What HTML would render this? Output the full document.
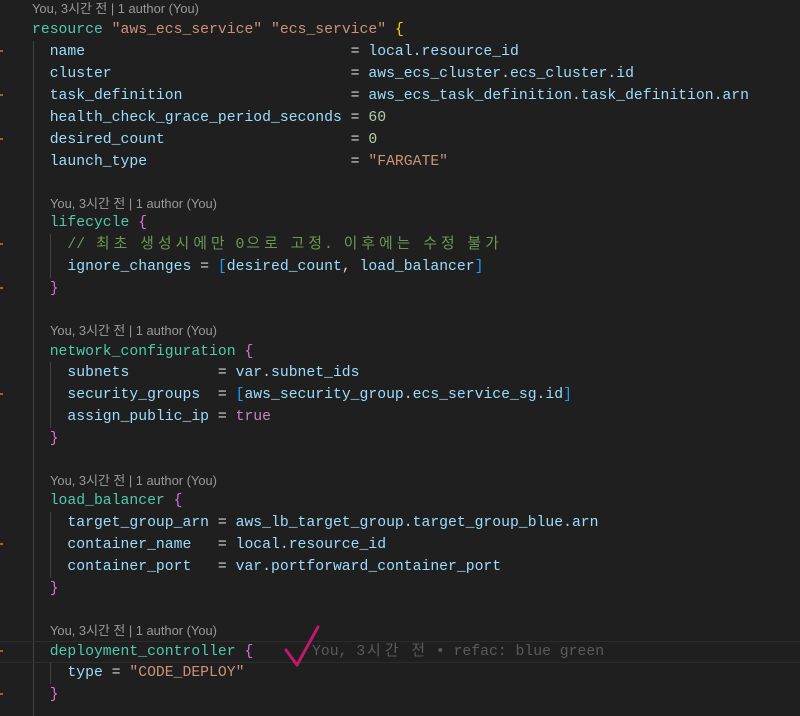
<!DOCTYPE html>
<html><head><meta charset="utf-8"><style>
body{margin:0;width:800px;height:714px;background:#1f1f1f;overflow:hidden;position:relative;font-family:"Liberation Mono","Noto Sans CJK KR",monospace;font-size:14.75px;color:#d4d4d4}
.l{position:absolute;left:32px;height:22px;line-height:22px;white-space:pre;margin-top:2px}
.cl{position:absolute;height:18px;line-height:18px;font-family:"Liberation Sans","Noto Sans CJK KR",sans-serif;font-size:12.9px;color:#999;white-space:pre}
.k{color:#4ec9b0}.s{color:#ce9178}.a{color:#9cdcfe}.n{color:#b5cea8}.y{color:#ffd700}.p{color:#da70d6}.b{color:#179fff}.c{color:#6a9955}.t{color:#c586c0}
.ko{display:inline-block;width:17.7px;text-align:center}
.g{position:absolute;width:1px;background:#404040}
.m{position:absolute;left:0;width:3px;height:2px;background:#a0602a}
</style></head><body>
<div class="g" style="left:33px;top:41px;height:675px"></div>
<div class="g" style="left:50px;top:234px;height:44px"></div>
<div class="g" style="left:50px;top:362px;height:66px"></div>
<div class="g" style="left:50px;top:512px;height:66px"></div>
<div class="g" style="left:50px;top:662px;height:22px"></div>
<div style="position:absolute;left:0;right:0;top:641px;height:22px;border-top:1px solid #2c2c2c;border-bottom:1px solid #2c2c2c;box-sizing:border-box"></div>

<div class="cl" style="left:32px;top:0">You, 3시간 전 | 1 author (You)</div>
<div class="l" style="top:17px"><span class="k">resource</span> <span class="s">"aws_ecs_service"</span> <span class="s">"ecs_service"</span> <span class="y">{</span></div>
<div class="l" style="top:39px">  <span class="a">name</span>                              = <span class="a">local.resource_id</span></div>
<div class="l" style="top:61px">  <span class="a">cluster</span>                           = <span class="a">aws_ecs_cluster.ecs_cluster.id</span></div>
<div class="l" style="top:83px">  <span class="a">task_definition</span>                   = <span class="a">aws_ecs_task_definition.task_definition.arn</span></div>
<div class="l" style="top:105px">  <span class="a">health_check_grace_period_seconds</span> = <span class="n">60</span></div>
<div class="l" style="top:127px">  <span class="a">desired_count</span>                     = <span class="n">0</span></div>
<div class="l" style="top:149px">  <span class="a">launch_type</span>                       = <span class="s">"FARGATE"</span></div>

<div class="cl" style="left:50px;top:195px">You, 3시간 전 | 1 author (You)</div>
<div class="l" style="top:210px">  <span class="k">lifecycle</span> <span class="p">{</span></div>
<div class="l c" style="top:232px">    // <span class="ko">최</span><span class="ko">초</span> <span class="ko">생</span><span class="ko">성</span><span class="ko">시</span><span class="ko">에</span><span class="ko">만</span> 0<span class="ko">으</span><span class="ko">로</span> <span class="ko">고</span><span class="ko">정</span>. <span class="ko">이</span><span class="ko">후</span><span class="ko">에</span><span class="ko">는</span> <span class="ko">수</span><span class="ko">정</span> <span class="ko">불</span><span class="ko">가</span></div>
<div class="l" style="top:254px">    <span class="a">ignore_changes</span> = <span class="b">[</span><span class="a">desired_count</span>, <span class="a">load_balancer</span><span class="b">]</span></div>
<div class="l" style="top:276px">  <span class="p">}</span></div>

<div class="cl" style="left:50px;top:322px">You, 3시간 전 | 1 author (You)</div>
<div class="l" style="top:339px">  <span class="k">network_configuration</span> <span class="p">{</span></div>
<div class="l" style="top:360px">    <span class="a">subnets</span>          = <span class="a">var.subnet_ids</span></div>
<div class="l" style="top:382px">    <span class="a">security_groups</span>  = <span class="b">[</span><span class="a">aws_security_group.ecs_service_sg.id</span><span class="b">]</span></div>
<div class="l" style="top:404px">    <span class="a">assign_public_ip</span> = <span class="t">true</span></div>
<div class="l" style="top:426px">  <span class="p">}</span></div>

<div class="cl" style="left:50px;top:472px">You, 3시간 전 | 1 author (You)</div>
<div class="l" style="top:488px">  <span class="k">load_balancer</span> <span class="p">{</span></div>
<div class="l" style="top:510px">    <span class="a">target_group_arn</span> = <span class="a">aws_lb_target_group.target_group_blue.arn</span></div>
<div class="l" style="top:532px">    <span class="a">container_name</span>   = <span class="a">local.resource_id</span></div>
<div class="l" style="top:554px">    <span class="a">container_port</span>   = <span class="a">var.portforward_container_port</span></div>
<div class="l" style="top:576px">  <span class="p">}</span></div>

<div class="cl" style="left:50px;top:622px">You, 3시간 전 | 1 author (You)</div>
<div class="l" style="top:639px">  <span class="k">deployment_controller</span> <span class="p">{</span></div>
<div class="l" style="top:639px;left:312px;color:#5a5a5a">You, 3<span class="ko">시</span><span class="ko">간</span> <span class="ko">전</span> • refac: blue green</div>
<div class="l" style="top:660px">    <span class="a">type</span> = <span class="s">"CODE_DEPLOY"</span></div>
<div class="l" style="top:682px">  <span class="p">}</span></div>

<svg style="position:absolute;left:280px;top:622px" width="45" height="50"><path d="M6 28 L17 43 L38 5" fill="none" stroke="#c2186b" stroke-width="3" stroke-linecap="round" stroke-linejoin="round"/></svg>

<div class="m" style="top:50px"></div><div class="m" style="top:94px"></div><div class="m" style="top:138px"></div>
<div class="m" style="top:243px"></div><div class="m" style="top:287px"></div><div class="m" style="top:393px"></div>
<div class="m" style="top:543px"></div><div class="m" style="top:650px"></div><div class="m" style="top:693px"></div>
</body></html>
